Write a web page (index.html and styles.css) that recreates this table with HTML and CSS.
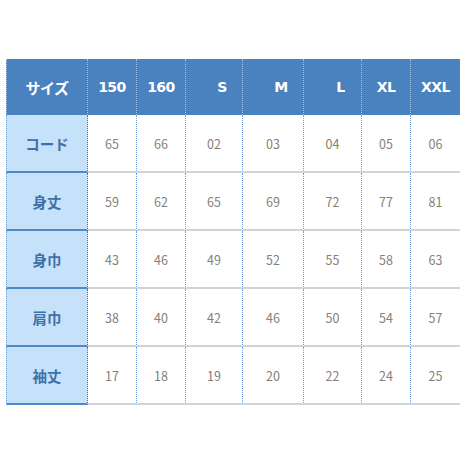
FILE: index.html
```html
<!DOCTYPE html>
<html lang="ja">
<head>
<meta charset="utf-8">
<link rel="stylesheet" href="styles.css">
</head>
<body>
<div class="sheet">
  <div class="grid">
    <div class="cell head first">サイズ</div>
    <div class="cell head">150</div>
    <div class="cell head">160</div>
    <div class="cell head shift">S</div>
    <div class="cell head shift">M</div>
    <div class="cell head shift">L</div>
    <div class="cell head">XL</div>
    <div class="cell head">XXL</div>

    <div class="cell label">コード</div>
    <div class="cell">65</div><div class="cell">66</div><div class="cell">02</div><div class="cell">03</div><div class="cell">04</div><div class="cell">05</div><div class="cell">06</div>

    <div class="cell label">身丈</div>
    <div class="cell">59</div><div class="cell">62</div><div class="cell">65</div><div class="cell">69</div><div class="cell">72</div><div class="cell">77</div><div class="cell">81</div>

    <div class="cell label">身巾</div>
    <div class="cell">43</div><div class="cell">46</div><div class="cell">49</div><div class="cell">52</div><div class="cell">55</div><div class="cell">58</div><div class="cell">63</div>

    <div class="cell label">肩巾</div>
    <div class="cell">38</div><div class="cell">40</div><div class="cell">42</div><div class="cell">46</div><div class="cell">50</div><div class="cell">54</div><div class="cell">57</div>

    <div class="cell label">袖丈</div>
    <div class="cell">17</div><div class="cell">18</div><div class="cell">19</div><div class="cell">20</div><div class="cell">22</div><div class="cell">24</div><div class="cell">25</div>
  </div>
</div>
</body>
</html>
```
FILE: styles.css
```css
html, body {
  margin: 0;
  padding: 0;
  background: #ffffff;
  overflow: hidden;
}
.sheet {
  padding: 59px 0 0 6px;
  width: 470px;
}
.grid {
  display: grid;
  grid-template-columns: 82px 49px 49px 57px 61px 58px 49px 50px;
  grid-auto-rows: 58px;
  grid-template-rows: 56px;
  font-family: "Noto Sans CJK JP", "DejaVu Sans", sans-serif;
}
.cell {
  box-sizing: border-box;
  display: flex;
  align-items: center;
  justify-content: center;
  border-right: 1px dotted #6f9fd4;
  border-bottom: 2px solid #d3d3d3;
  color: #85807a;
  font-size: 12.5px;
  background: #ffffff;
}
.head {
  background: #4a82bf;
  color: #ffffff;
  font-family: "DejaVu Sans", "Noto Sans CJK JP", sans-serif;
  font-weight: bold;
  font-size: 14px;
  border-bottom: none;
  border-right: 1px dotted #9dc0e6;
  letter-spacing: -0.5px;
}
.head.first {
  font-family: "Noto Sans CJK JP", sans-serif;
  border-left: 1px dotted #9dc0e6;
  font-size: 15px;
}
.shift {
  padding-left: 16px;
}
.label {
  background: #c6e2fb;
  color: #4070a8;
  font-weight: bold;
  font-size: 14.5px;
  border-left: 1px dotted #6f9fd4;
  border-right: 1px dotted #3f78b8;
  border-bottom: 2px solid #4f88c6;
}
```
